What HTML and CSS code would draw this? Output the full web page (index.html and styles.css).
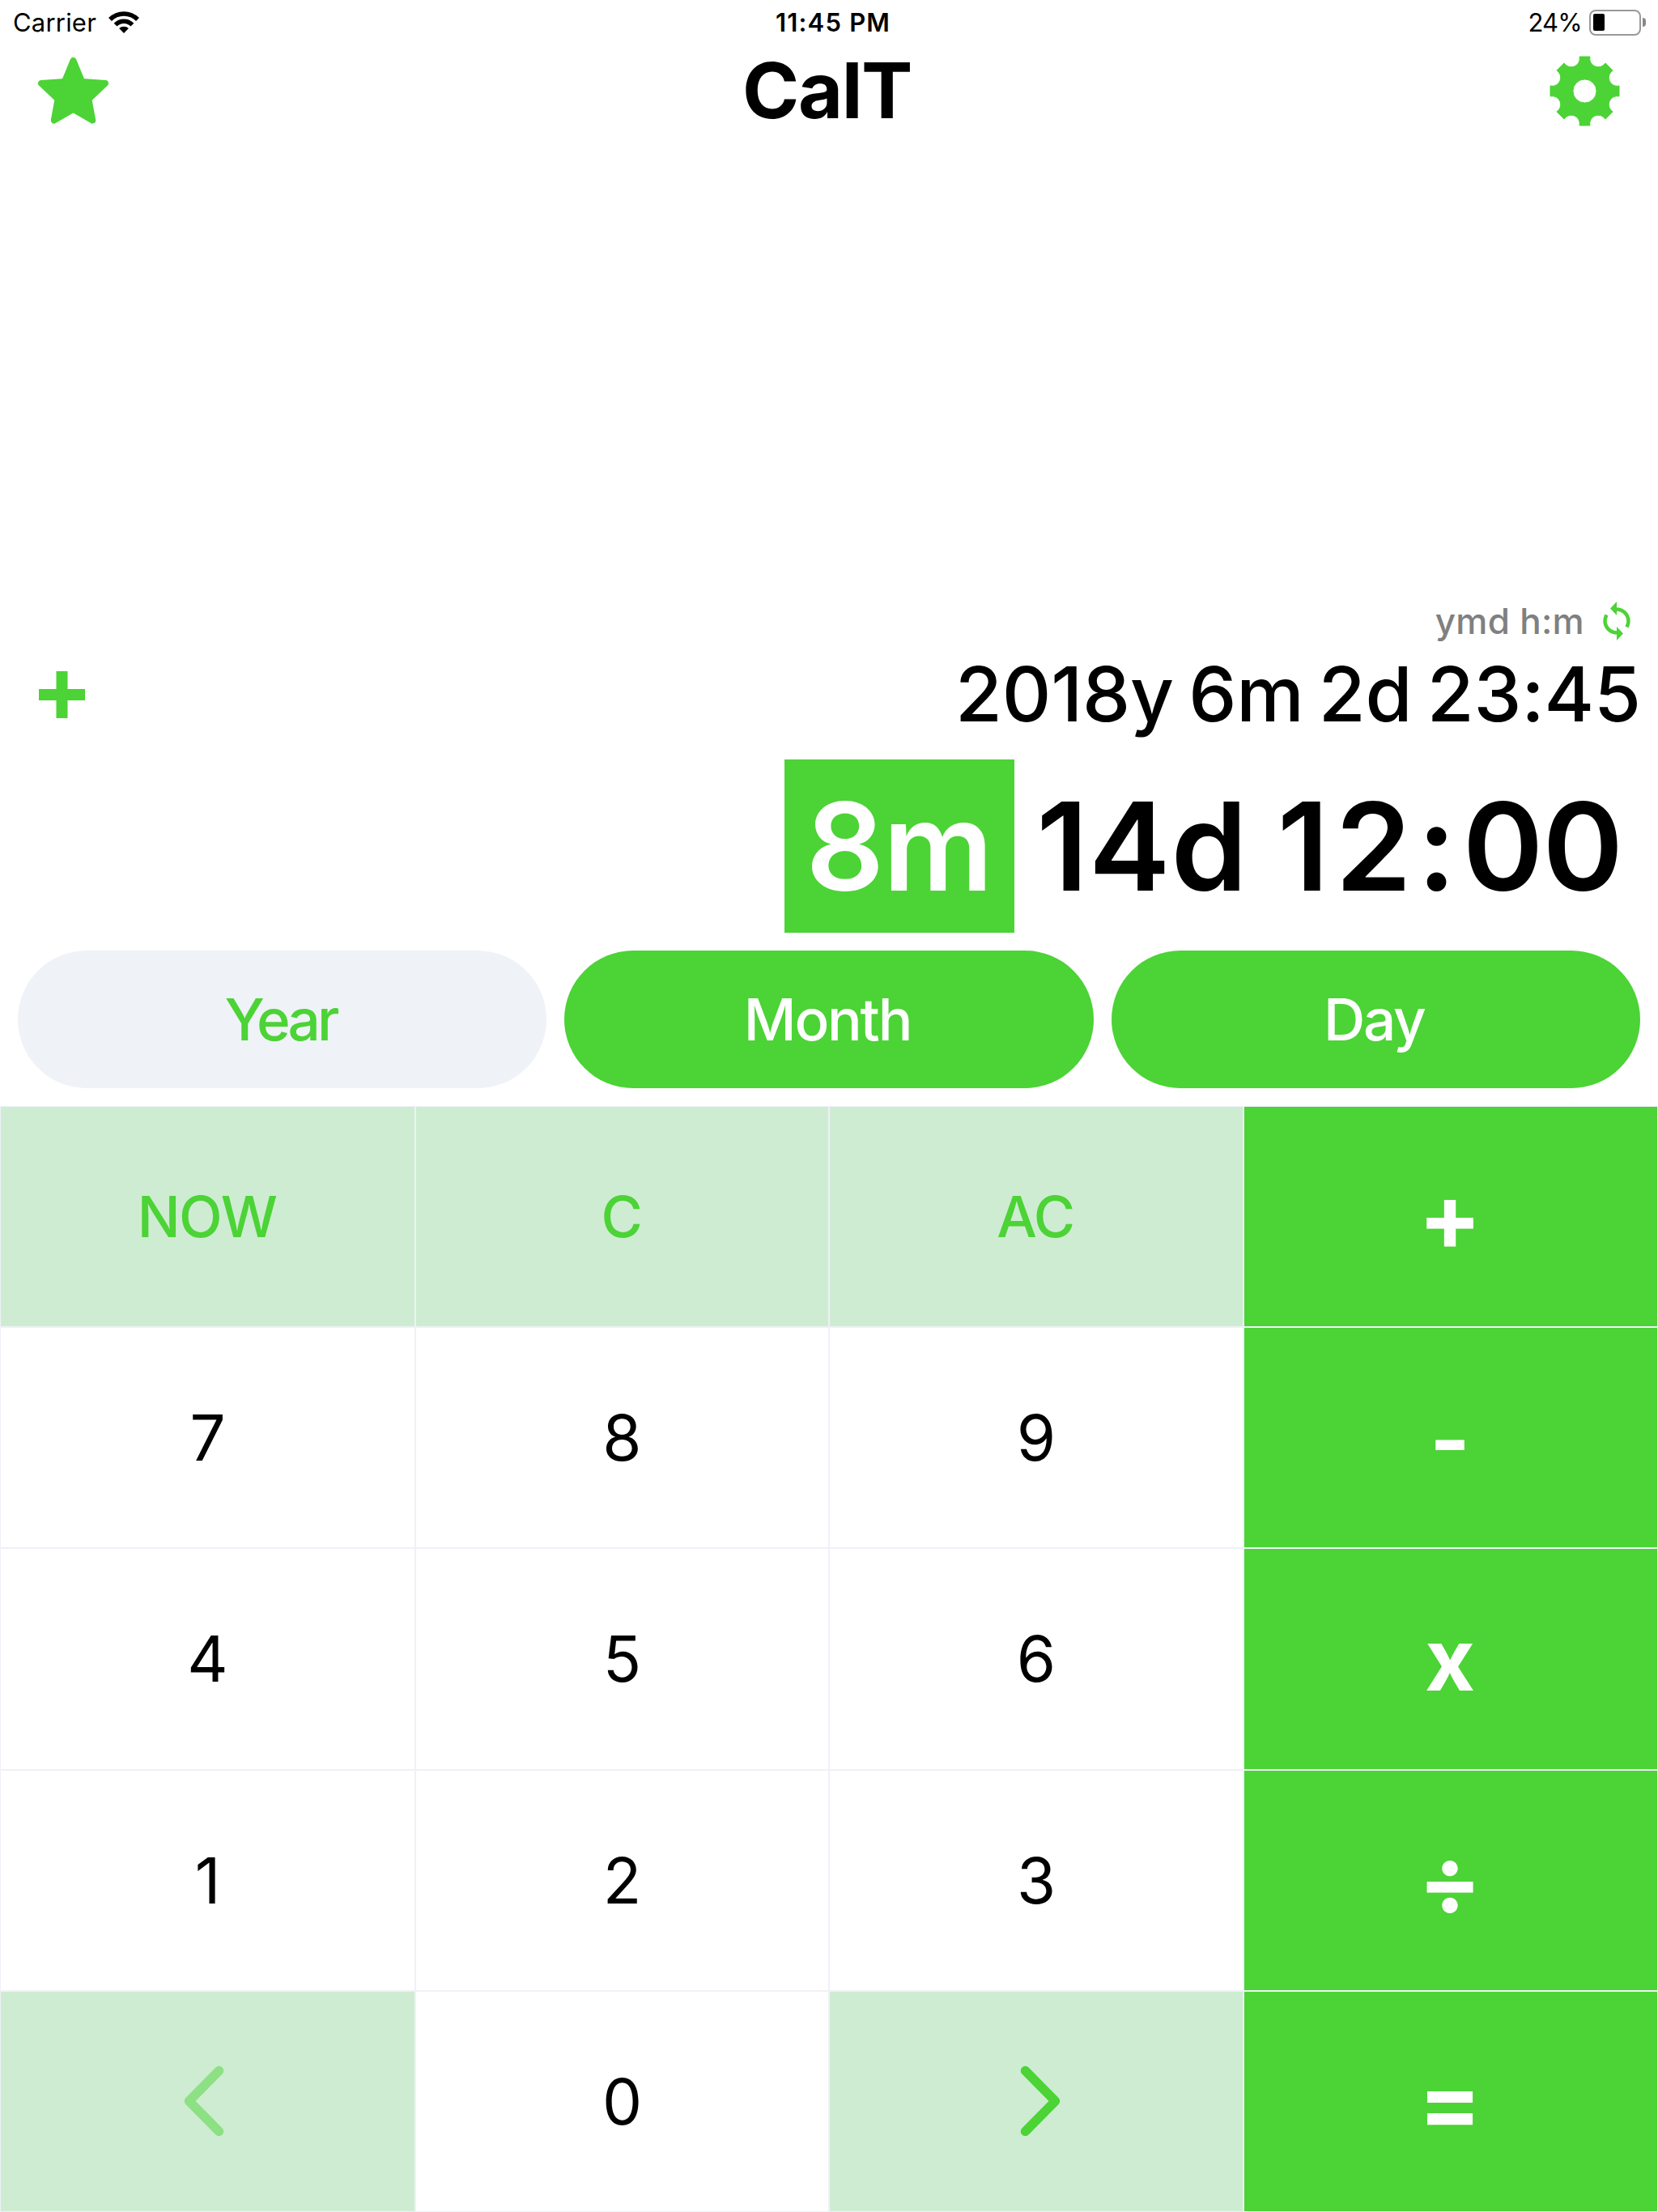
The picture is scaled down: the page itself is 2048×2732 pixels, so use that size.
FILE: index.html
```
<!DOCTYPE html>
<html lang="en">
<head>
  <meta charset="UTF-8" />
  <meta name="viewport" content="width=device-width, initial-scale=1.0"/>
  <title>CalT</title>
  <link rel="stylesheet" href="styles.css">
</head>
<body>
  <div class="status-bar">
    <div class="carrier">
      <span>Carrier</span>
      <svg class="wifi" viewBox="-19 -27 38 27">
        <path d="M-17 -17A24 24 0 0 1 17 -17" />
        <path d="M-10.4 -10.4A14.7 14.7 0 0 1 10.4 -10.4" />
        <path class="dot" d="M0 0L-5.9 -5.9A8.3 8.3 0 0 1 5.9 -5.9Z" />
      </svg>
    </div>
    <div class="clock">11:45 PM</div>
    <div class="power">
      <span>24%</span>
      <div class="battery"><div class="level"></div></div>
      <div class="battery-cap"></div>
    </div>
  </div>

  <header>
    <svg class="star" viewBox="46 70 90 84">
      <path d="M90.5 75L101.2 101L130 102.9L109.4 122.4L114.2 148.5L90.5 134.8L66.8 148.5L71.6 122.4L51 102.9L79.8 101Z" />
    </svg>
    <h1>CalT</h1>
    <svg class="gear" viewBox="-44 -44 88 88">
      <path fill-rule="evenodd" d="M-6.5 -43L6.5 -43A10.6 10.6 0 0 0 25.8 -35L35 -25.8A10.6 10.6 0 0 0 43 -6.5L43 6.5A10.6 10.6 0 0 0 35 25.8L25.8 35A10.6 10.6 0 0 0 6.5 43L-6.5 43A10.6 10.6 0 0 0 -25.8 35L-35 25.8A10.6 10.6 0 0 0 -43 6.5L-43 -6.5A10.6 10.6 0 0 0 -35 -25.8L-25.8 -35A10.6 10.6 0 0 0 -6.5 -43ZM0 -14.7A14.7 14.7 0 0 0 0 14.7A14.7 14.7 0 0 0 0 -14.7Z" />
    </svg>
  </header>

  <main class="display">
    <div class="format">
      <span>ymd h:m</span>
      <svg class="swap" viewBox="0 0 34 48">
        <path d="M16 9.5C26 9.5 31.5 17 31.5 24C31.5 27 30.5 29.5 29.5 31.5" />
        <path d="M18 38.5C8 38.5 2.5 31 2.5 24C2.5 21 3.5 18.5 4.5 16.5" />
        <path class="head" d="M9 8.5L17 0V17Z" />
        <path class="head" d="M25 39.5L17 48V31Z" />
      </svg>
    </div>
    <div class="result">
      <svg class="add" viewBox="0 0 57 58">
        <path d="M28.5 0V58M0 29H57" />
      </svg>
      <span>2018y 6m 2d 23:45</span>
    </div>
    <div class="entry">
      <span class="selected">8m</span>
      <span class="days">14d</span>
      <span class="hours">12</span>
      <span class="colon">:</span>
      <span class="minutes">00</span>
    </div>
  </main>

  <div class="units">
    <button class="off">Year</button>
    <button>Month</button>
    <button>Day</button>
  </div>

  <div class="keypad">
    <button class="fn">NOW</button>
    <button class="fn">C</button>
    <button class="fn">AC</button>
    <button class="op wide">+</button>
    <button>7</button>
    <button>8</button>
    <button>9</button>
    <button class="op minus">-</button>
    <button>4</button>
    <button>5</button>
    <button>6</button>
    <button class="op">x</button>
    <button>1</button>
    <button>2</button>
    <button>3</button>
    <button class="op wide">÷</button>
    <button class="fn prev">
      <svg class="chevron" viewBox="0 0 50 88"><path d="M43.5 6.5L6.5 44L43.5 81.5" /></svg>
    </button>
    <button>0</button>
    <button class="fn next">
      <svg class="chevron" viewBox="0 0 50 88"><path d="M6.5 6.5L43.5 44L6.5 81.5" /></svg>
    </button>
    <button class="op wide">=</button>
  </div>
</body>
</html>
```
FILE: styles.css
```
* {
  box-sizing: border-box;
}
body {
  margin: 0;
  width: 2048px;
  height: 2732px;
  display: flex;
  flex-direction: column;
  background-color: white;
  color: black;
  font-family: Inter, "Liberation Sans", sans-serif;
  overflow: hidden;
}
svg {
  display: block;
  flex: none;
}
button {
  border: none;
  padding: 0;
  margin: 0;
  font-family: inherit;
}

/* status bar */
.status-bar {
  height: 55px;
  display: grid;
  grid-template-columns: 1fr auto 1fr;
  align-items: center;
  padding: 0 15px 0 16px;
  font-size: 31px;
}
.carrier, .power {
  display: flex;
  align-items: center;
}
.carrier {
  gap: 15px;
  letter-spacing: 0.2px;
}
.power {
  justify-content: flex-end;
  letter-spacing: -0.8px;
}
.clock {
  padding-left: 9px;
  font-weight: 600;
  letter-spacing: 1.2px;
}
.wifi {
  width: 38px;
  height: 27px;
}
.wifi path {
  fill: none;
  stroke: black;
  stroke-width: 5.5;
}
.wifi .dot {
  fill: black;
  stroke: none;
}
.battery {
  width: 64px;
  height: 32px;
  margin-left: 9px;
  padding: 3px;
  border: 2.5px solid #999;
  border-radius: 8px;
}
.level {
  width: 14px;
  height: 21px;
  background-color: black;
  border-radius: 2px;
}
.battery-cap {
  width: 4px;
  height: 11px;
  margin-left: 2px;
  background-color: #888;
  border-radius: 0 4px 4px 0;
}

/* title */
header {
  height: 114px;
  display: flex;
  align-items: center;
  justify-content: space-between;
  padding: 0 47px 0 46px;
}
h1 {
  margin: 0;
  padding-right: 7px;
  font-size: 95px;
  font-weight: 700;
  line-height: 116px;
  letter-spacing: -1.4px;
}
.star {
  width: 90px;
  height: 84px;
}
.star path {
  fill: #4cd336;
  stroke: #4cd336;
  stroke-width: 8;
  stroke-linejoin: round;
}
.gear {
  width: 87px;
  height: 87px;
}
.gear path {
  fill: #4cd336;
  stroke: #4cd336;
  stroke-width: 1;
  stroke-linejoin: round;
}

/* display */
.display {
  flex: 1;
  display: flex;
  flex-direction: column;
  justify-content: flex-end;
}
.format {
  height: 60px;
  display: flex;
  align-items: center;
  justify-content: flex-end;
  gap: 23px;
  padding-right: 34px;
  font-size: 44px;
  font-weight: 500;
  letter-spacing: 0.3px;
  color: #808080;
}
.swap {
  width: 34px;
  height: 48px;
}
.swap path {
  fill: none;
  stroke: #4cd336;
  stroke-width: 4.5;
}
.swap .head {
  fill: #4cd336;
  stroke: none;
}
.result {
  height: 120px;
  display: flex;
  align-items: center;
  justify-content: space-between;
  padding: 0 21px 0 48px;
  font-size: 94px;
  font-weight: 500;
  letter-spacing: -0.2px;
  word-spacing: -6.5px;
}
.add {
  width: 57px;
  height: 58px;
  margin-top: 2px;
}
.add path {
  fill: none;
  stroke: #4cd336;
  stroke-width: 14;
}
.entry {
  height: 214px;
  margin-top: 21px;
  display: flex;
  justify-content: flex-end;
  padding-right: 44px;
  font-size: 151px;
  font-weight: 600;
  line-height: 214px;
}
.selected {
  width: 284px;
  padding-right: 2px;
  text-align: center;
  letter-spacing: -1.5px;
  background-color: #4cd336;
  color: white;
}
.days {
  margin-left: 27px;
  letter-spacing: 0.9px;
}
.hours {
  margin-left: 36px;
  letter-spacing: 8px;
}
.colon {
  margin: 0 8px 0 -1px;
}
.minutes {
  letter-spacing: -1px;
}

/* unit buttons */
.units {
  display: grid;
  grid-template-columns: 1fr 1fr 1fr;
  gap: 22px;
  padding: 22px;
}
.units button {
  height: 170px;
  padding-right: 4px;
  border-radius: 85px;
  background-color: #4cd336;
  color: white;
  font-size: 71px;
  font-weight: 500;
  letter-spacing: -2.2px;
}
.units .off {
  background-color: #eff2f7;
  color: #4cd336;
  letter-spacing: -3.8px;
}

/* keypad */
.keypad {
  height: 1366px;
  display: grid;
  grid-template-columns: 513px 511px 512px 512px;
  grid-template-rows: repeat(5, 1fr);
}
.keypad button {
  display: flex;
  align-items: center;
  justify-content: center;
  background-color: white;
  border: 1px solid #eff1f8;
  color: black;
  font-size: 78px;
}
.keypad .fn {
  padding-right: 2px;
  background-color: #ceecd2;
  color: #4cd336;
  font-size: 70px;
  font-weight: 500;
  letter-spacing: -1.5px;
}
.keypad .op {
  padding-right: 2px;
  background-color: #4cd336;
  color: white;
  font-size: 107px;
  font-weight: 700;
}
.keypad .wide {
  font-size: 115px;
}
.keypad .minus {
  padding-top: 4px;
}
.chevron {
  width: 50px;
  height: 88px;
}
.chevron path {
  fill: none;
  stroke: #4cd336;
  stroke-width: 11.5;
  stroke-linecap: round;
  stroke-linejoin: round;
}
.prev .chevron {
  margin-right: 8px;
}
.next .chevron {
  margin-left: 11px;
}
.prev .chevron path {
  stroke: #8de083;
}
```
